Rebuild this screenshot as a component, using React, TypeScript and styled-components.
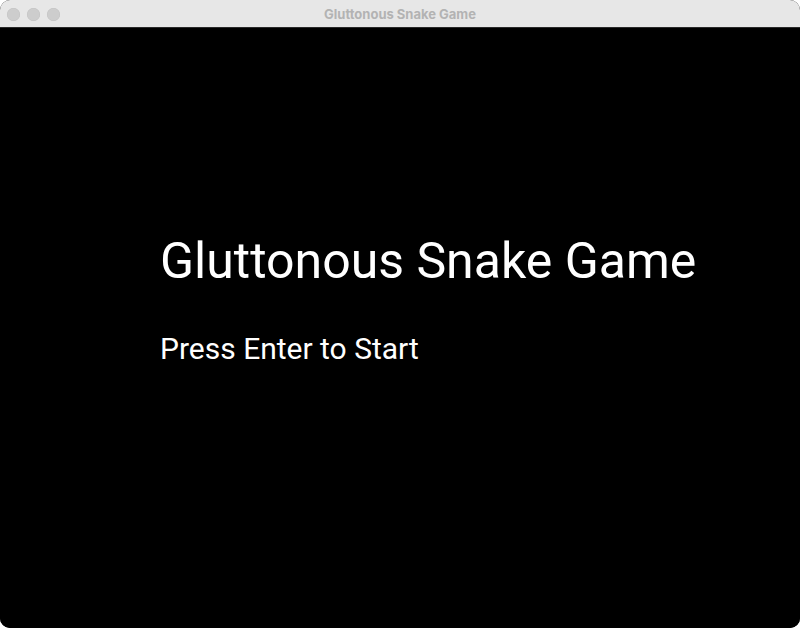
import React from "react";
import styled, { createGlobalStyle } from "styled-components";

const Global = createGlobalStyle`
  html, body { margin: 0; padding: 0; background: #ffffff; }
  #root { width: 800px; height: 628px; }
`;

const Window = styled.div`
  width: 800px;
  height: 628px;
  display: flex;
  flex-direction: column;
  border-radius: 10px;
  overflow: hidden;
  background: #000;
`;

const TitleBar = styled.div`
  height: 27px;
  flex: 0 0 auto;
  display: flex;
  align-items: center;
  position: relative;
  background: #e7e7e7;
  border-bottom: 1px solid #2a2a2a;
`;

const Lights = styled.div`
  display: flex;
  gap: 7px;
  padding-left: 7px;
  padding-top: 1px;
`;

const Light = styled.span`
  width: 13px;
  height: 13px;
  border-radius: 50%;
  background: #cdcdcd;
  box-shadow: inset 0 0 0 0.5px #c2c2c2;
`;

const Title = styled.div`
  position: absolute;
  left: 0;
  right: 0;
  text-align: center;
  font-family: "Inter", "Liberation Sans", sans-serif;
  font-weight: 700;
  font-size: 13px;
  color: #b3b3b3;
  pointer-events: none;
`;

const Screen = styled.div`
  flex: 1;
  background: #000;
  display: flex;
  flex-direction: column;
  padding: 204px 0 0 160px;
  font-family: Roboto, "Noto Sans", sans-serif;
  color: #fff;
`;

const Heading = styled.div`
  font-size: 50px;
  line-height: 58px;
`;

const Prompt = styled.div`
  margin-top: 42px;
  font-size: 30px;
  line-height: 34px;
`;

export default function App() {
  return (
    <>
      <Global />
      <Window>
        <TitleBar>
          <Lights>
            <Light />
            <Light />
            <Light />
          </Lights>
          <Title>Gluttonous Snake Game</Title>
        </TitleBar>
        <Screen>
          <Heading>Gluttonous Snake Game</Heading>
          <Prompt>Press Enter to Start</Prompt>
        </Screen>
      </Window>
    </>
  );
}
